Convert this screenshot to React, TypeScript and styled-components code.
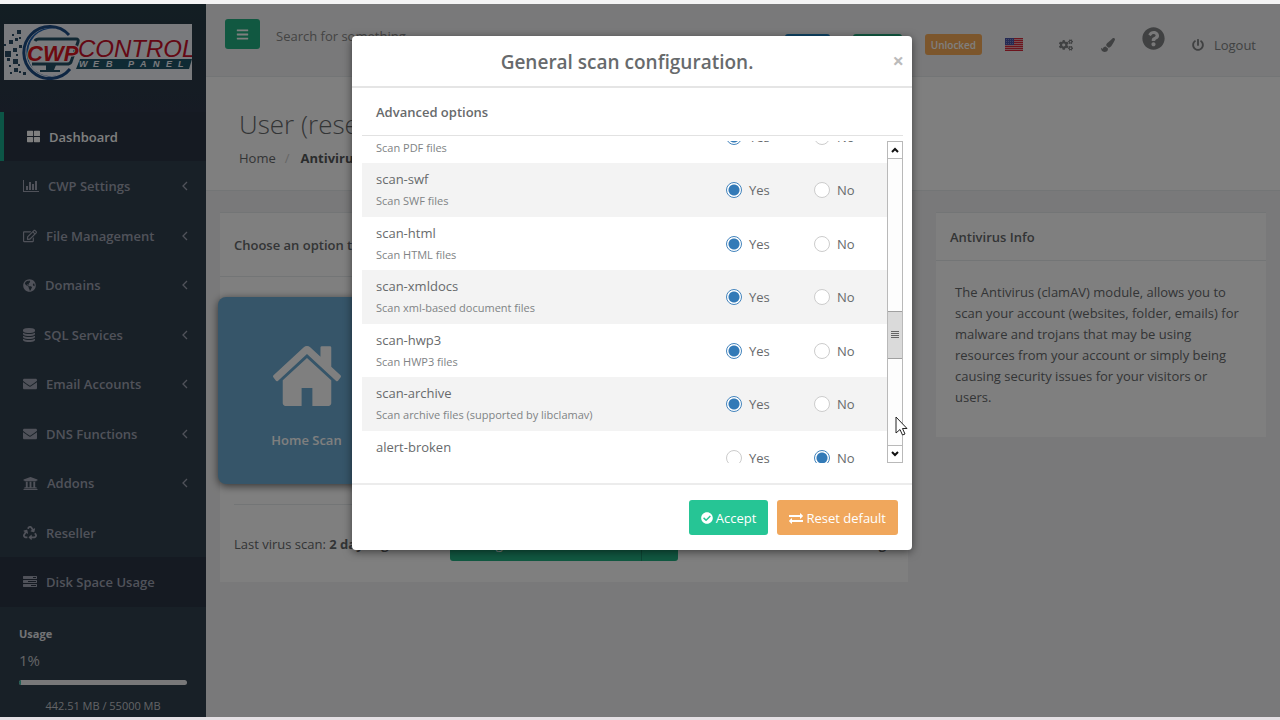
import React, { useLayoutEffect, useRef } from "react";
import styled, { createGlobalStyle, css } from "styled-components";
import {
  FaBars,
  FaCheckCircle,
  FaCog,
  FaCogs,
  FaEnvelope,
  FaGlobeAmericas,
  FaPaintBrush,
  FaPowerOff,
  FaQuestionCircle,
  FaRecycle,
  FaRegEdit,
  FaThLarge,
  FaUniversity,
} from "react-icons/fa";

const GlobalStyle = createGlobalStyle`
  *, *::before, *::after { box-sizing: border-box; }
  body {
    margin: 0;
    background: #f4f4f4;
    color: #676a6c;
    font: 13px/20px "Open Sans", "Noto Sans", sans-serif;
  }
  button, input { font: inherit; color: inherit; }
  h1, h2, h3, p, ul, ol { margin: 0; padding: 0; }
  ul, ol { list-style: none; }
  a { color: inherit; text-decoration: none; }
`;

/* ---------- glyphs ---------- */

const Glyph = styled.svg<{ $w?: number; $h?: number }>`
  width: ${(p) => p.$w ?? 14}px;
  height: ${(p) => p.$h ?? 14}px;
  fill: currentColor;
  flex: none;
`;

const AngleIcon = () => (
  <Glyph viewBox="0 0 6 10" $w={6} $h={10}>
    <path d="M5 1L1 5L5 9" fill="none" stroke="currentColor" strokeWidth="1.300" />
  </Glyph>
);

const BarChartIcon = () => (
  <Glyph viewBox="0 0 2048 1792" $w={16}>
    <path d="M640 896v512h-256v-512h256zm384-512v1024h-256v-1024h256zm1024 1152v128h-2048v-1536h128v1408h1920zm-640-896v768h-256v-768h256zm384-384v1152h-256v-1152h256z" />
  </Glyph>
);

const DatabaseIcon = () => (
  <Glyph viewBox="128 0 1536 1792" $w={12}>
    <path d="M896 768q237 0 443-43t325-127v170q0 69-103 128t-280 93.500-385 34.500-385-34.500-280-93.500-103-128v-170q119 84 325 127t443 43zm0 768q237 0 443-43t325-127v170q0 69-103 128t-280 93.500-385 34.500-385-34.500-280-93.500-103-128v-170q119 84 325 127t443 43zm0-384q237 0 443-43t325-127v170q0 69-103 128t-280 93.500-385 34.500-385-34.500-280-93.500-103-128v-170q119 84 325 127t443 43zm0-1152q208 0 385 34.500t280 93.500 103 128v128q0 69-103 128t-280 93.500-385 34.500-385-34.500-280-93.500-103-128v-128q0-69 103-128t280-93.500 385-34.500z" />
  </Glyph>
);

const TasksIcon = () => (
  <Glyph viewBox="0 0 1792 1792">
    <path d="M1024 1408h640v-128h-640v128zm-384-512h1024v-128h-1024v128zm640-512h384v-128h-384v128zm512 832v256q0 26-19 45t-45 19h-1664q-26 0-45-19t-19-45v-256q0-26 19-45t45-19h1664q26 0 45 19t19 45zm0-512v256q0 26-19 45t-45 19h-1664q-26 0-45-19t-19-45v-256q0-26 19-45t45-19h1664q26 0 45 19t19 45zm0-512v256q0 26-19 45t-45 19h-1664q-26 0-45-19t-19-45v-256q0-26 19-45t45-19h1664q26 0 45 19t19 45z" />
  </Glyph>
);

const ExchangeIcon = () => (
  <Glyph viewBox="0 0 1792 1792">
    <path d="M1792 1184v192q0 13-9.500 22.500t-22.500 9.500h-1376v192q0 13-9.500 22.500t-22.500 9.500q-12 0-24-10l-319-320q-9-9-9-22 0-14 9-23l320-320q9-9 23-9 13 0 22.500 9.500t9.500 22.500v192h1376q13 0 22.500 9.500t9.500 22.500zm0-544q0 14-9 23l-320 320q-9 9-23 9-13 0-22.500-9.500t-9.500-22.500v-192h-1376q-13 0-22.500-9.500t-9.500-22.500v-192q0-13 9.500-22.500t22.500-9.500h1376v-192q0-14 9-23t23-9q12 0 24 10l319 319q9 9 9 23z" />
  </Glyph>
);

const HomeIcon = () => (
  <Glyph viewBox="89 253 1614 1283" preserveAspectRatio="none" $w={68} $h={60}>
    <path d="M1472 992v480q0 26-19 45t-45 19h-384v-384h-256v384h-384q-26 0-45-19t-19-45v-480q0-1 .5-3t.5-3l575-474 575 474q1 2 1 6zm223-69l-62 74q-8 9-21 11h-3q-13 0-21-7l-692-577-692 577q-12 8-24 7-13-2-21-11l-62-74q-8-10-7-23.500t11-21.500l719-599q32-26 76-26t76 26l244 204v-195q0-14 9-23t23-9h192q14 0 23 9t9 23v408l219 182q10 8 11 21.500t-7 23.500z" />
  </Glyph>
);

const FlagIcon = () => (
  <Glyph viewBox="0 0 18 13" $w={18} $h={13}>
    <rect width="18" height="13" rx="1" fill="#f3d9dc" />
    {[0, 2, 4, 6, 8, 10, 12].map((y) => (
      <rect key={y} y={y} width="18" height="1.300" fill="#d8293a" />
    ))}
    <rect width="9" height="7" fill="#4a55a8" />
    {[1.5, 3.5, 5.5].map((y) =>
      [1.5, 3.5, 5.5, 7.5].map((x) => (
        <circle key={`${x}-${y}`} cx={x} cy={y} r="0.4" fill="#d5d8f0" />
      ))
    )}
  </Glyph>
);

const LOGO_PIXELS = [
  [13, 6, 4], [8, 10, 2], [15, 13, 2], [5, 16, 4], [11, 14, 3], [0, 20, 2],
  [9, 24, 4], [1, 27, 6], [12, 30, 2], [3, 34, 3], [9, 35, 5], [5, 41, 2],
  [10, 44, 4], [15, 47, 2], [19, 48, 3], [14, 40, 2], [6, 48, 2], [15, 21, 3],
];

const LOGO_CAPTION: [string, number][] = [
  ["W", 75], ["E", 89], ["B", 102], ["P", 124], ["A", 136], ["N", 149], ["E", 162], ["L", 174],
];

const Logo = () => (
  <Glyph viewBox="0 0 188 56" $w={188} $h={56} role="img" aria-label="CWP Control Web Panel">
    <rect width="188" height="56" fill="#f2f4fa" />
    {LOGO_PIXELS.map(([x, y, s]) => (
      <rect key={`${x}-${y}`} x={x} y={y} width={s} height={s} fill="#2a4d66" />
    ))}
    <path d="M65 11A26 26 0 1 0 66 45" fill="none" stroke="#1d4d86" strokeWidth="3" />
    <path d="M56 6A24 24 0 1 0 56 50A22 22 0 0 1 24 28A24 24 0 0 1 56 6Z" fill="#1d5fae" />
    <path d="M31 17Q32 15 35 15H72Q75 15 74 18L67 38Q66 40 63 40H28" fill="none" stroke="#245066" strokeWidth="3" />
    <path d="M42 41H52L50 46H56V48H36V46H42Z" fill="#245066" />
    <path d="M76 35H188L185 45H72Z" fill="#1f5568" />
    <g fontFamily="Liberation Sans, sans-serif" fontStyle="italic" fontWeight="400">
      <text x="23" y="37" fontSize="22" fontWeight="bold" fill="#d8141f" stroke="#f2f4fa" strokeWidth="2" paintOrder="stroke">CWP</text>
      <text x="74" y="33" fontSize="24" fill="#c8102a">CONTROL</text>
      {LOGO_CAPTION.map(([c, x]) => (
        <text key={x} x={x} y="43" fontSize="9" fontWeight="bold" fill="#f2f4fa">{c}</text>
      ))}
    </g>
  </Glyph>
);

/* ---------- page frame ---------- */

const Screen = styled.div`
  position: relative;
  display: flex;
  min-height: 100vh;
  border-top: 4px solid #f4f4f4;
  border-bottom: 3px solid #e4e0e4;
  background: #f3f3f4;
`;

const Sidebar = styled.aside`
  display: flex;
  flex-direction: column;
  flex: none;
  width: 206px;
  background: #31404e;
  color: #a0a5b4;
  font-weight: 600;
`;

const Brand = styled.a`
  display: block;
  height: 108px;
  padding: 20px 4px 0;
  background: linear-gradient(#263c46, #2c3748);
`;

const NavItem = styled.li<{ $active?: boolean; $dark?: boolean }>`
  height: 49px;
  border-left: 4px solid ${(p) => (p.$active ? "#19aa8d" : "transparent")};
  background: ${(p) => (p.$active || p.$dark ? "#2a3444" : "transparent")};
  &:nth-child(even) { height: 50px; }
  ${(p) => p.$active && css`color: #fff; a { padding-left: 23px; }`}
`;

const NavLink = styled.a`
  display: flex;
  align-items: center;
  gap: 9px;
  height: 100%;
  padding: 0 18px 0 19px;
`;

const NavText = styled.span`
  flex: 1;
`;

const Usage = styled.section`
  display: flex;
  flex-direction: column;
  padding: 17px 19px 0;
  font-weight: 400;
  color: #c4c7cd;
`;

const UsageTitle = styled.h3`
  font-size: 11px;
  line-height: 20px;
  font-weight: 700;
  color: #e6e8ec;
`;

const UsageValue = styled.p`
  padding-top: 4px;
  font-size: 15px;
  line-height: 24px;
`;

const Meter = styled.div`
  height: 5px;
  margin-top: 8px;
  border-radius: 3px;
  background: #f1f1f2;
  overflow: hidden;
`;

const MeterFill = styled.div`
  height: 100%;
  background: #3fb8a4;
`;

const UsageNote = styled.p`
  padding-top: 11px;
  font-size: 11px;
  line-height: 20px;
  text-align: center;
`;

const Main = styled.main`
  flex: 1;
  min-width: 0;
`;

const TopBar = styled.header`
  display: flex;
  justify-content: space-between;
  height: 73px;
  padding: 15px 24px 0 19px;
  border-bottom: 1px solid #e7eaec;
`;

const SearchGroup = styled.div`
  display: flex;
  align-items: flex-start;
  gap: 12px;
`;

const MenuButton = styled.button`
  display: grid;
  place-items: center;
  width: 35px;
  height: 30px;
  padding: 0;
  border: 0;
  border-radius: 3px;
  background: #22b082;
  color: #fff;
`;

const SearchInput = styled.input`
  width: 200px;
  height: 34px;
  padding: 0 4px;
  border: 0;
  background: transparent;
  &::placeholder { color: #888; opacity: 1; }
`;

const Tools = styled.div`
  display: flex;
  align-items: center;
  height: 51px;
`;

const Label = styled.span<{ $color: string; $width: number }>`
  display: grid;
  place-items: center;
  width: ${(p) => p.$width}px;
  height: 21px;
  margin-right: 23px;
  border-radius: 3px;
  background: ${(p) => p.$color};
  color: #fff;
  font-size: 10px;
  font-weight: 600;
`;

const Tool = styled.a<{ $gap: number; $raised?: boolean }>`
  display: flex;
  align-items: center;
  gap: 10px;
  margin-right: ${(p) => p.$gap}px;
  padding-bottom: ${(p) => (p.$raised ? 12 : 0)}px;
  color: #808385;
`;

const Heading = styled.section`
  height: 114px;
  padding: 29px 33px 0;
  border-bottom: 1px solid #e7eaec;
  background: #fff;
`;

const PageTitle = styled.h1`
  font-size: 26px;
  line-height: 36px;
  font-weight: 300;
`;

const Crumbs = styled.ol`
  display: flex;
  gap: 9px;
  padding-top: 6px;
  li + li::before { content: "/"; margin-right: 11px; color: #ccc; font-weight: 400; }
  li + li { font-weight: 700; color: #55585a; }
`;

const Columns = styled.div`
  display: grid;
  grid-template-columns: minmax(0, 688fr) minmax(0, 330fr);
  gap: 28px;
  align-items: start;
  padding: 21px 14px 0;
`;

const Panel = styled.section`
  background: #fff;
  border-top: 1px solid #e7eaec;
`;

const PanelTitle = styled.h2<{ $tall?: boolean }>`
  padding: ${(p) => (p.$tall ? "22px 14px 21px" : "14px 14px 13px")};
  border-bottom: 1px solid #e7eaec;
  font-size: 13px;
  line-height: 20px;
  font-weight: 600;
`;

const Tile = styled.button`
  display: flex;
  flex-direction: column;
  align-items: center;
  justify-content: center;
  gap: 24px;
  width: 177px;
  height: 187px;
  margin: 20px 0 0 -2px;
  padding: 14px 0 0;
  border: 0;
  border-radius: 8px;
  background: #6cabd2;
  box-shadow: 0 2px 8px rgba(0, 0, 0, 0.6);
  color: #fff;
  font-weight: 600;
`;

const StatusRow = styled.div`
  display: grid;
  grid-template-columns: 216px 228px 1fr;
  align-items: center;
  margin: 20px 14px 0;
  padding: 22px 8px 21px 0;
  border-top: 1px solid #e7eaec;
  > :last-child { text-align: right; }
`;

const SplitButton = styled.div`
  display: flex;
  height: 34px;
  border-radius: 3px;
  background: #22b082;
  color: #fff;
  overflow: hidden;
`;

const SplitPart = styled.button<{ $main?: boolean }>`
  flex: ${(p) => (p.$main ? "1" : "0 0 37px")};
  padding: ${(p) => (p.$main ? "0 14px" : "0")};
  border: 0;
  border-left: ${(p) => (p.$main ? "0" : "1px solid #1b8d68")};
  background: transparent;
  text-align: ${(p) => (p.$main ? "left" : "center")};
`;

const InfoText = styled.p`
  padding: 21px 24px 29px 19px;
  line-height: 21px;
`;

/* ---------- dialog ---------- */

const Backdrop = styled.div`
  position: absolute;
  inset: 0;
  display: flex;
  justify-content: center;
  align-items: flex-start;
  padding: 32px 16px 0 0;
  background: rgba(0, 0, 0, 0.5);
`;

const Dialog = styled.div`
  position: relative;
  width: 560px;
  max-width: 100%;
  border-radius: 4px;
  background: #fff;
  box-shadow: 0 2px 8px rgba(0, 0, 0, 0.5);
`;

const DialogHead = styled.header`
  display: grid;
  grid-template-columns: 16px 1fr 18px;
  align-items: center;
  height: 52px;
  padding: 0 8px 0 0;
  border-bottom: 2px solid #e5e5e5;
`;

const DialogTitle = styled.h2`
  grid-column: 2;
  padding-top: 2px;
  font-size: 19px;
  line-height: 28px;
  font-weight: 600;
  text-align: center;
`;

const CloseButton = styled.button`
  justify-self: end;
  padding: 0;
  border: 0;
  background: none;
  color: #bbb;
  font-size: 20px;
  line-height: 20px;
  font-weight: 700;
`;

const DialogBody = styled.div`
  padding: 0 9px 20px 10px;
`;

const SectionTitle = styled.h3`
  height: 48px;
  padding: 14px 14px 0;
  border-bottom: 1px solid #e2e2e2;
  font-size: 13px;
  line-height: 20px;
  font-weight: 600;
`;

const ScrollArea = styled.div`
  display: flex;
  margin-top: 5px;
  height: 322px;
`;

const OptionList = styled.div`
  flex: 1;
  overflow-y: auto;
  scrollbar-width: none;
`;

const OptionRow = styled.fieldset`
  display: grid;
  grid-template-columns: 1fr 88px 73px;
  height: 53px;
  margin: 0;
  padding: 0 0 0 14px;
  border: 0;
  min-width: 0;
  &:nth-child(even) { height: 54px; background: #f3f3f3; }
`;

const OptionText = styled.div`
  padding-top: 6px;
`;

const OptionName = styled.p`
  line-height: 20px;
`;

const OptionHint = styled.p`
  padding-top: 3px;
  font-size: 11px;
  line-height: 18px;
  color: #808385;
`;

const Choice = styled.label`
  display: flex;
  align-items: center;
  gap: 7px;
`;

const Radio = styled.input`
  appearance: none;
  width: 16px;
  height: 16px;
  margin: 0;
  border: 1px solid #ccc;
  border-radius: 50%;
  background: #fff;
  &:checked {
    border-color: #4384bd;
    background: radial-gradient(circle, #337ab7 5px, #fff 6px);
  }
`;

const ScrollTrack = styled.div`
  display: flex;
  flex-direction: column;
  width: 16px;
  border: 1px solid #b9b9b9;
  background: #fdfdfd;
`;

const ScrollArrow = styled.button<{ $down?: boolean }>`
  display: grid;
  place-items: center;
  height: 17px;
  padding: 0;
  border: 0 solid #b9b9b9;
  border-width: ${(p) => (p.$down ? "1px 0 0" : "0 0 1px")};
  background: #fff;
`;

const ScrollThumb = styled.div`
  display: grid;
  place-items: center;
  height: 48px;
  margin: 152px 0 auto;
  border: solid #a0a0a0;
  border-width: 1px 0;
  background: #dadada;
`;

const DialogFoot = styled.footer`
  display: flex;
  justify-content: flex-end;
  gap: 9px;
  padding: 15px 14px;
  border-top: 2px solid #ececec;
`;

const ActionButton = styled.button<{ $color: string }>`
  display: flex;
  align-items: center;
  gap: 3px;
  height: 35px;
  padding: 0 12px;
  border: 0;
  border-radius: 3px;
  background: ${(p) => p.$color};
  color: #fff;
`;

const Pointer = styled.svg`
  position: absolute;
  top: 380px;
  left: 543px;
  width: 13px;
  height: 21px;
`;

/* ---------- data ---------- */

const NAV = [
  { label: "Dashboard", icon: <FaThLarge size={13} />, active: true },
  { label: "CWP Settings", icon: <BarChartIcon />, menu: true },
  { label: "File Management", icon: <FaRegEdit size={14} />, menu: true },
  { label: "Domains", icon: <FaGlobeAmericas size={13} />, menu: true },
  { label: "SQL Services", icon: <DatabaseIcon />, menu: true },
  { label: "Email Accounts", icon: <FaEnvelope size={14} />, menu: true },
  { label: "DNS Functions", icon: <FaEnvelope size={14} />, menu: true },
  { label: "Addons", icon: <FaUniversity size={15} />, menu: true },
  { label: "Reseller", icon: <FaRecycle size={14} /> },
  { label: "Disk Space Usage", icon: <TasksIcon />, dark: true },
];

const OPTIONS = [
  { name: "scan-pdf", hint: "Scan PDF files", on: true },
  { name: "scan-swf", hint: "Scan SWF files", on: true },
  { name: "scan-html", hint: "Scan HTML files", on: true },
  { name: "scan-xmldocs", hint: "Scan xml-based document files", on: true },
  { name: "scan-hwp3", hint: "Scan HWP3 files", on: true },
  { name: "scan-archive", hint: "Scan archive files (supported by libclamav)", on: true },
  { name: "alert-broken", hint: "", on: false },
];

export default function App() {
  const list = useRef<HTMLDivElement>(null);

  useLayoutEffect(() => {
    if (list.current) list.current.scrollTop = 31;
  }, []);

  return (
    <>
      <GlobalStyle />
      <Screen>
        <Sidebar>
          <Brand href="#"><Logo /></Brand>
          <nav>
            <ul>
              {NAV.map((n) => (
                <NavItem key={n.label} $active={n.active} $dark={n.dark}>
                  <NavLink href="#">
                    {n.icon}
                    <NavText>{n.label}</NavText>
                    {n.menu && <AngleIcon />}
                  </NavLink>
                </NavItem>
              ))}
            </ul>
          </nav>
          <Usage>
            <UsageTitle>Usage</UsageTitle>
            <UsageValue>1%</UsageValue>
            <Meter><MeterFill style={{ width: "1%" }} /></Meter>
            <UsageNote>442.51 MB / 55000 MB</UsageNote>
          </Usage>
        </Sidebar>

        <Main>
          <TopBar>
            <SearchGroup>
              <MenuButton aria-label="Toggle menu"><FaBars size={13} /></MenuButton>
              <SearchInput placeholder="Search for something..." aria-label="Search" />
            </SearchGroup>
            <Tools>
              <Label $color="#1c84c6" $width={45} />
              <Label $color="#22b082" $width={49} />
              <Label $color="#f8ac59" $width={57}>Unlocked</Label>
              <Tool href="#" aria-label="Language" $gap={36}><FlagIcon /></Tool>
              <Tool href="#" aria-label="Settings" $gap={28}><FaCogs size={14} /></Tool>
              <Tool href="#" aria-label="Theme" $gap={27}><FaPaintBrush size={14} /></Tool>
              <Tool href="#" aria-label="Help" $gap={27} $raised><FaQuestionCircle size={23} /></Tool>
              <Tool href="#" $gap={0}><FaPowerOff size={12} />Logout</Tool>
            </Tools>
          </TopBar>

          <Heading>
            <PageTitle>User (reseller)</PageTitle>
            <Crumbs>
              <li><a href="#">Home</a></li>
              <li>Antivirus</li>
            </Crumbs>
          </Heading>

          <Columns>
            <Panel>
              <PanelTitle $tall>Choose an option to scan</PanelTitle>
              <Tile><HomeIcon />Home Scan</Tile>
              <StatusRow>
                <p>Last virus scan: <b>2 days ago</b></p>
                <SplitButton>
                  <SplitPart $main>Configuration</SplitPart>
                  <SplitPart aria-label="Settings"><FaCog size={14} /></SplitPart>
                </SplitButton>
                <b>Running</b>
              </StatusRow>
            </Panel>
            <Panel>
              <PanelTitle>Antivirus Info</PanelTitle>
              <InfoText>
                The Antivirus (clamAV) module, allows you to scan your account (websites,
                folder, emails) for malware and trojans that may be using resources from
                your account or simply being causing security issues for your visitors or
                users.
              </InfoText>
            </Panel>
          </Columns>
        </Main>

        <Backdrop>
          <Dialog role="dialog" aria-labelledby="dialog-title">
            <DialogHead>
              <DialogTitle id="dialog-title">General scan configuration.</DialogTitle>
              <CloseButton aria-label="Close">×</CloseButton>
            </DialogHead>
            <DialogBody>
              <SectionTitle>Advanced options</SectionTitle>
              <ScrollArea>
                <OptionList ref={list}>
                  {OPTIONS.map((o) => (
                    <OptionRow key={o.name} aria-label={o.name}>
                      <OptionText>
                        <OptionName>{o.name}</OptionName>
                        {o.hint && <OptionHint>{o.hint}</OptionHint>}
                      </OptionText>
                      <Choice><Radio type="radio" name={o.name} defaultChecked={o.on} />Yes</Choice>
                      <Choice><Radio type="radio" name={o.name} defaultChecked={!o.on} />No</Choice>
                    </OptionRow>
                  ))}
                </OptionList>
                <ScrollTrack>
                  <ScrollArrow aria-label="Scroll up">
                    <svg width="8" height="6"><path d="M1 5L4 2L7 5" fill="none" stroke="#111" strokeWidth="2" /></svg>
                  </ScrollArrow>
                  <ScrollThumb>
                    <svg width="8" height="8" shapeRendering="crispEdges"><path d="M0 .5H8M0 2.500H8M0 4.500H8M0 6.500H8" stroke="#666" /></svg>
                  </ScrollThumb>
                  <ScrollArrow $down aria-label="Scroll down">
                    <svg width="8" height="6"><path d="M1 1L4 4L7 1" fill="none" stroke="#111" strokeWidth="2" /></svg>
                  </ScrollArrow>
                </ScrollTrack>
              </ScrollArea>
            </DialogBody>
            <DialogFoot>
              <ActionButton $color="#26c595"><FaCheckCircle size={12} />Accept</ActionButton>
              <ActionButton $color="#f0a75c"><ExchangeIcon />Reset default</ActionButton>
            </DialogFoot>
            <Pointer viewBox="0 0 13 21">
              <path d="M1 1V17L5 13.500L7.500 19L10 18L7.500 12.500H12Z" fill="#fff" stroke="#222" />
            </Pointer>
          </Dialog>
        </Backdrop>
      </Screen>
    </>
  );
}
